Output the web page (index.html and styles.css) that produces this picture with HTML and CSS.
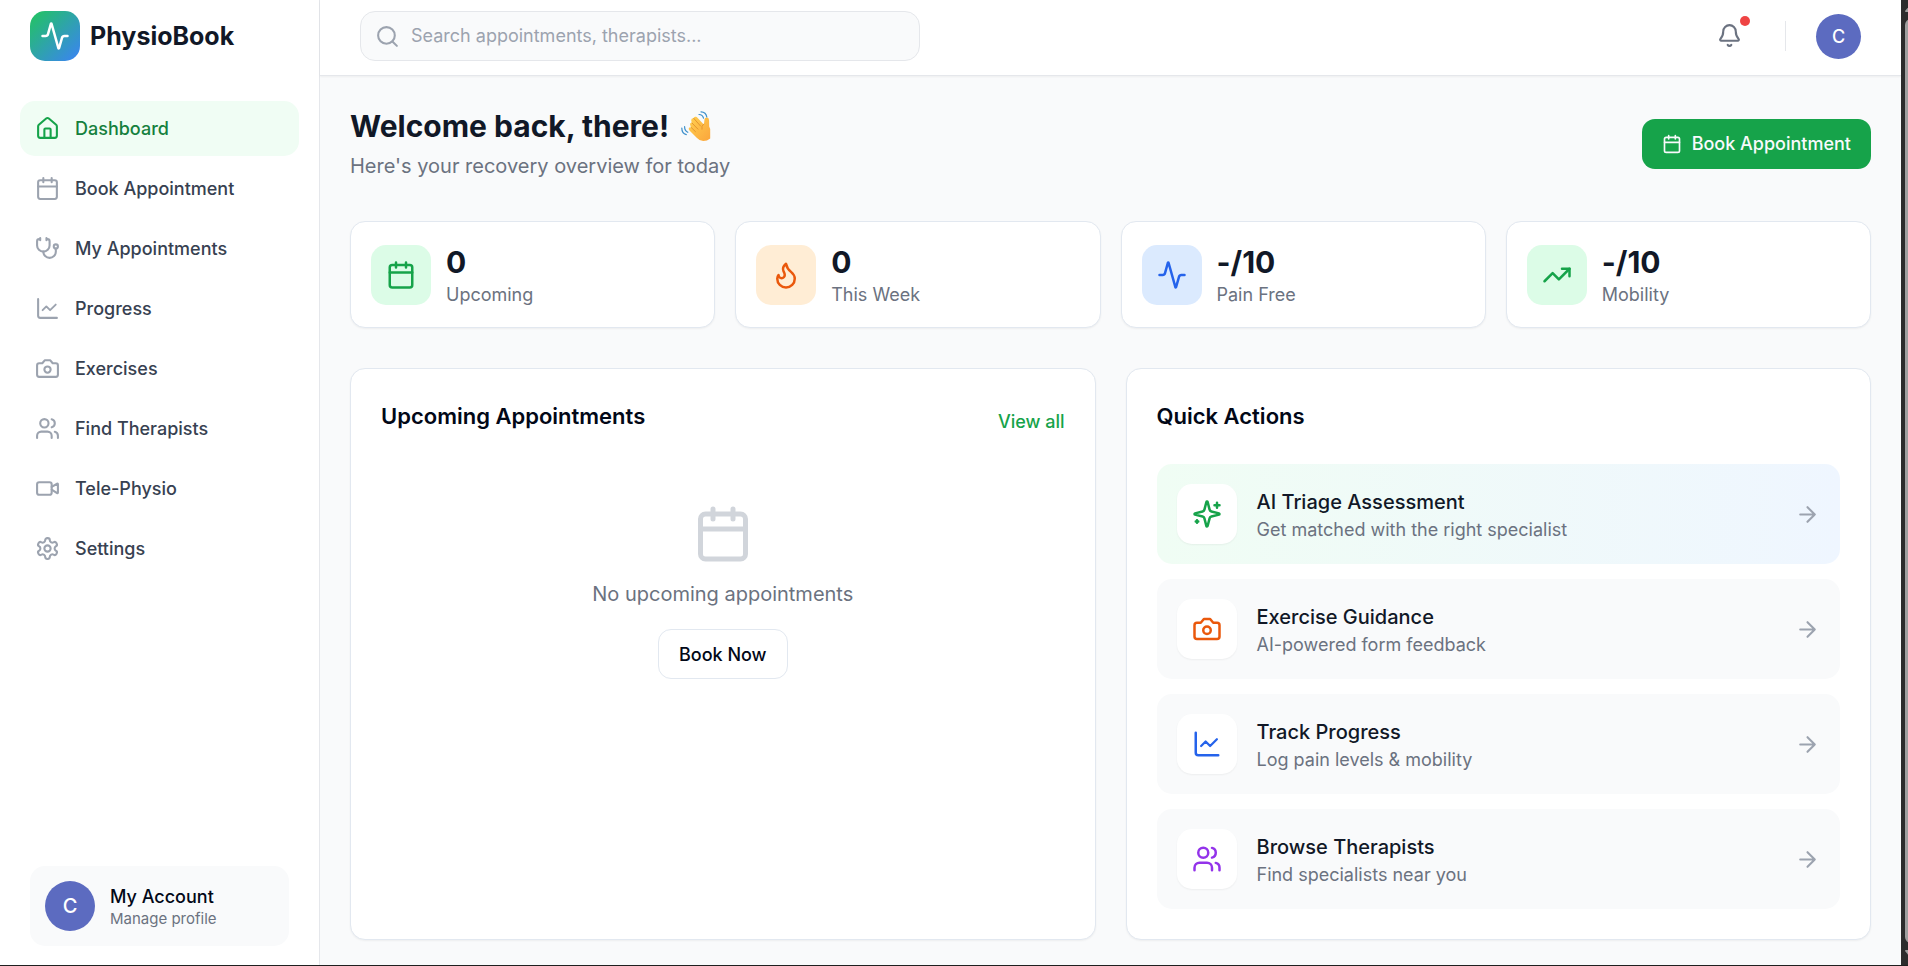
FILE: index.html
```html
<!DOCTYPE html>
<html lang="en">
<head>
<meta charset="utf-8">
<meta name="viewport" content="width=device-width, initial-scale=1">
<title>PhysioBook</title>
<link rel="stylesheet" href="styles.css">
</head>
<body>
<svg class="sprite" aria-hidden="true">
  <symbol id="activity" viewBox="0 0 24 24"><path d="M22 12h-2.48a2 2 0 0 0-1.93 1.46l-2.35 8.36a.25.25 0 0 1-.48 0L9.24 2.18a.25.25 0 0 0-.48 0l-2.35 8.36A2 2 0 0 1 4.49 12H2"/></symbol>
  <symbol id="home" viewBox="0 0 24 24"><path d="M15 21v-8a1 1 0 0 0-1-1h-4a1 1 0 0 0-1 1v8"/><path d="M3 10a2 2 0 0 1 .709-1.528l7-5.999a2 2 0 0 1 2.582 0l7 5.999A2 2 0 0 1 21 10v9a2 2 0 0 1-2 2H5a2 2 0 0 1-2-2z"/></symbol>
  <symbol id="calendar" viewBox="0 0 24 24"><path d="M8 2v4M16 2v4M3 10h18"/><rect width="18" height="18" x="3" y="4" rx="2"/></symbol>
  <symbol id="stethoscope" viewBox="0 0 24 24"><path d="M11 2v2M5 2v2M5 3H4a2 2 0 0 0-2 2v4a6 6 0 0 0 12 0V5a2 2 0 0 0-2-2h-1"/><path d="M8 15a6 6 0 0 0 12 0v-3"/><circle cx="20" cy="10" r="2"/></symbol>
  <symbol id="chart" viewBox="0 0 24 24"><path d="M3 3v16a2 2 0 0 0 2 2h16"/><path d="m7 14 4-4 4 4 6-6" transform="translate(1 1) scale(.9)"/></symbol>
  <symbol id="camera" viewBox="0 0 24 24"><path d="M14.5 4h-5L7 7H4a2 2 0 0 0-2 2v9a2 2 0 0 0 2 2h16a2 2 0 0 0 2-2V9a2 2 0 0 0-2-2h-3l-2.500-3z"/><circle cx="12" cy="13" r="3"/></symbol>
  <symbol id="users" viewBox="0 0 24 24"><path d="M16 21v-2a4 4 0 0 0-4-4H6a4 4 0 0 0-4 4v2"/><circle cx="9" cy="7" r="4"/><path d="M22 21v-2a4 4 0 0 0-3-3.870M16 3.130a4 4 0 0 1 0 7.750"/></symbol>
  <symbol id="video" viewBox="0 0 24 24"><path d="m16 13 5.223 3.482a.5.5 0 0 0 .777-.416V7.870a.5.5 0 0 0-.752-.432L16 10.500"/><rect x="2" y="6" width="14" height="12" rx="2"/></symbol>
  <symbol id="settings" viewBox="0 0 24 24"><path d="M12.220 2h-.440a2 2 0 0 0-2 2v.180a2 2 0 0 1-1 1.730l-.430.250a2 2 0 0 1-2 0l-.150-.080a2 2 0 0 0-2.730.730l-.220.380a2 2 0 0 0 .730 2.730l.150.100a2 2 0 0 1 1 1.720v.510a2 2 0 0 1-1 1.740l-.150.090a2 2 0 0 0-.730 2.730l.220.380a2 2 0 0 0 2.730.730l.150-.080a2 2 0 0 1 2 0l.430.250a2 2 0 0 1 1 1.730V20a2 2 0 0 0 2 2h.440a2 2 0 0 0 2-2v-.180a2 2 0 0 1 1-1.730l.430-.250a2 2 0 0 1 2 0l.150.080a2 2 0 0 0 2.730-.730l.220-.390a2 2 0 0 0-.730-2.730l-.150-.080a2 2 0 0 1-1-1.740v-.500a2 2 0 0 1 1-1.740l.150-.090a2 2 0 0 0 .730-2.730l-.220-.380a2 2 0 0 0-2.730-.730l-.150.080a2 2 0 0 1-2 0l-.430-.250a2 2 0 0 1-1-1.730V4a2 2 0 0 0-2-2z"/><circle cx="12" cy="12" r="3"/></symbol>
  <symbol id="search" viewBox="0 0 24 24"><circle cx="11" cy="11" r="8"/><path d="m21 21-4.300-4.300"/></symbol>
  <symbol id="bell" viewBox="0 0 24 24"><path d="M10.268 21a2 2 0 0 0 3.464 0"/><path d="M3.262 15.326A1 1 0 0 0 4 17h16a1 1 0 0 0 .740-1.673C19.410 13.956 18 12.499 18 8A6 6 0 0 0 6 8c0 4.499-1.411 5.956-2.738 7.326"/></symbol>
  <symbol id="flame" viewBox="0 0 24 24"><path d="M8.500 14.500A2.500 2.500 0 0 0 11 12c0-1.380-.5-2-1-3-1.072-2.143-.224-4.054 2-6 .5 2.500 2 4.900 4 6.500 2 1.600 3 3.500 3 5.500a7 7 0 1 1-14 0c0-1.153.433-2.294 1-3a2.500 2.500 0 0 0 2.500 2.500z"/></symbol>
  <symbol id="trending" viewBox="0 0 24 24"><path d="M22 7l-8.500 8.500-5-5L2 17"/><path d="M16 7h6v6"/></symbol>
  <symbol id="arrow" viewBox="0 0 24 24"><path d="M5 12h14M12 5l7 7-7 7"/></symbol>
  <symbol id="sparkles" viewBox="0 0 24 24"><path d="M9.937 15.500A2 2 0 0 0 8.500 14.063l-6.135-1.582a.5.5 0 0 1 0-.962L8.500 9.936A2 2 0 0 0 9.937 8.500l1.582-6.135a.5.5 0 0 1 .963 0L14.063 8.500A2 2 0 0 0 15.500 9.937l6.135 1.581a.5.5 0 0 1 0 .964L15.500 14.063a2 2 0 0 0-1.437 1.437l-1.582 6.135a.5.5 0 0 1-.963 0z"/><path d="M20 3v4M22 5h-4M4 17v2M5 18H3"/></symbol>
</svg>

<div class="app">
  <aside class="sidebar">
    <div class="brand">
      <span class="brand-mark"><svg class="icon icon-lg"><use href="#activity"/></svg></span>
      <span class="brand-name">PhysioBook</span>
    </div>
    <nav class="nav" aria-label="Main">
      <a class="nav-item active" href="#" aria-current="page"><svg class="icon icon-md"><use href="#home"/></svg>Dashboard</a>
      <a class="nav-item" href="#"><svg class="icon icon-md"><use href="#calendar"/></svg>Book Appointment</a>
      <a class="nav-item" href="#"><svg class="icon icon-md"><use href="#stethoscope"/></svg>My Appointments</a>
      <a class="nav-item" href="#"><svg class="icon icon-md"><use href="#chart"/></svg>Progress</a>
      <a class="nav-item" href="#"><svg class="icon icon-md"><use href="#camera"/></svg>Exercises</a>
      <a class="nav-item" href="#"><svg class="icon icon-md"><use href="#users"/></svg>Find Therapists</a>
      <a class="nav-item" href="#"><svg class="icon icon-md"><use href="#video"/></svg>Tele-Physio</a>
      <a class="nav-item" href="#"><svg class="icon icon-md"><use href="#settings"/></svg>Settings</a>
    </nav>
    <div class="account">
      <button class="avatar avatar-lg" type="button" aria-label="Open account menu">C</button>
      <div>
        <p class="account-name">My Account</p>
        <p class="account-note">Manage profile</p>
      </div>
    </div>
  </aside>

  <div class="page">
    <header class="topbar">
      <label class="search">
        <svg class="icon icon-md"><use href="#search"/></svg>
        <input type="search" aria-label="Search" placeholder="Search appointments, therapists...">
      </label>
      <div class="topbar-tools">
        <button class="bell" type="button" aria-label="Notifications"><svg class="icon icon-md"><use href="#bell"/></svg><span class="bell-dot"></span></button>
        <span class="divider"></span>
        <button class="avatar" type="button" aria-label="Open user menu">C</button>
      </div>
    </header>

    <main class="content">
      <section class="welcome">
        <div>
          <h1>Welcome back, there!
            <svg class="wave" viewBox="0 0 30 30" role="img" aria-label="Waving hand">
              <defs><linearGradient id="skin" x1="0" y1="0" x2="1" y2="1"><stop offset="0" stop-color="#ffd04f"/><stop offset="1" stop-color="#fba53c"/></linearGradient></defs>
              <path d="M8.500 19.500q-1.800-2.500.5-3.300l1 .2-.8-2.400q-.6-2.200 1.600-2.300l-.6-2.200q-.1-2.300 2.200-2.200.6-2.200 2.700-1.500.9.300 1.600 1.200l5.800 6.200q.9-1.200.8-3.200.1-3.700 2.900-3.400 2 .4 1.900 3.100l.1 5.800 1 2.500v9.500q-3 2.500-7 2.500-3.600 0-6.200-3z" fill="url(#skin)"/>
              <path d="M10.200 16.500l4.300 4.200M11 12l6 6.200M12.700 7.300l6.800 7.700M22.500 13.200q-2.400 1.600-1.600 5" stroke="#e0902c" stroke-width=".9" fill="none" stroke-linecap="round"/>
              <path d="M18 3.500q3.500 0 4.500 3.700M20 .8q5 .2 5.800 5.200M.8 17q0 5.500 4.500 6.700M3.600 15.700q0 4 3.200 5.600" stroke="#3c8fcb" stroke-width="1.200" fill="none" stroke-linecap="round"/>
            </svg>
          </h1>
          <p class="subtitle">Here's your recovery overview for today</p>
        </div>
        <button class="btn btn-primary" type="button"><svg class="icon icon-sm"><use href="#calendar"/></svg>Book Appointment</button>
      </section>

      <section class="stats" aria-label="Overview">
        <div class="card stat"><span class="tile green"><svg class="icon icon-lg"><use href="#calendar"/></svg></span><div><p class="stat-value">0</p><p class="stat-label">Upcoming</p></div></div>
        <div class="card stat"><span class="tile orange"><svg class="icon icon-lg"><use href="#flame"/></svg></span><div><p class="stat-value">0</p><p class="stat-label">This Week</p></div></div>
        <div class="card stat"><span class="tile blue"><svg class="icon icon-lg"><use href="#activity"/></svg></span><div><p class="stat-value">-/10</p><p class="stat-label">Pain Free</p></div></div>
        <div class="card stat"><span class="tile green"><svg class="icon icon-lg"><use href="#trending"/></svg></span><div><p class="stat-value">-/10</p><p class="stat-label">Mobility</p></div></div>
      </section>

      <div class="panels">
        <section class="card panel">
          <div class="panel-head"><h2>Upcoming Appointments</h2><a class="view-all" href="#">View all</a></div>
          <div class="empty">
            <svg class="icon icon-xl"><use href="#calendar"/></svg>
            <p>No upcoming appointments</p>
            <button class="btn btn-outline" type="button">Book Now</button>
          </div>
        </section>
        <section class="card panel">
          <div class="panel-head"><h2>Quick Actions</h2></div>
          <div class="actions">
            <a class="action featured" href="#"><span class="tile raised tint-green"><svg class="icon icon-lg"><use href="#sparkles"/></svg></span><span class="action-text"><span class="action-title">AI Triage Assessment</span><span class="action-note">Get matched with the right specialist</span></span><svg class="icon icon-md go"><use href="#arrow"/></svg></a>
            <a class="action" href="#"><span class="tile raised tint-orange"><svg class="icon icon-lg"><use href="#camera"/></svg></span><span class="action-text"><span class="action-title">Exercise Guidance</span><span class="action-note">AI-powered form feedback</span></span><svg class="icon icon-md go"><use href="#arrow"/></svg></a>
            <a class="action" href="#"><span class="tile raised tint-blue"><svg class="icon icon-lg"><use href="#chart"/></svg></span><span class="action-text"><span class="action-title">Track Progress</span><span class="action-note">Log pain levels &amp; mobility</span></span><svg class="icon icon-md go"><use href="#arrow"/></svg></a>
            <a class="action" href="#"><span class="tile raised tint-purple"><svg class="icon icon-lg"><use href="#users"/></svg></span><span class="action-text"><span class="action-title">Browse Therapists</span><span class="action-note">Find specialists near you</span></span><svg class="icon icon-md go"><use href="#arrow"/></svg></a>
          </div>
        </section>
      </div>
    </main>
  </div>

  <div class="scrollbar" aria-hidden="true">
    <svg class="scroll-arrow" viewBox="0 0 12 8"><path d="M6 0 12 7Q12 8 11 8H1Q0 8 0 7Z"/></svg>
    <span class="thumb"></span>
    <svg class="scroll-arrow" viewBox="0 0 12 8"><path d="M6 8 12 1Q12 0 11 0H1Q0 0 0 1Z"/></svg>
  </div>
</div>
</body>
</html>
```
FILE: styles.css
```css
:root {
  --ink: #111827;
  --ink-strong: #020817;
  --muted: #6b7280;
  --faint: #9ca3af;
  --line: #e2e8f0;
  --surface: #f9fafb;
  --green: #16a34a;
  --text-sm: 18px;
  --text-md: 20px;
}

* { box-sizing: border-box; }

body {
  margin: 0;
  font-family: Inter, "Liberation Sans", sans-serif;
  font-size: var(--text-md);
  line-height: 30px;
  color: var(--ink-strong);
  background: var(--surface);
}

h1, h2, p { margin: 0; }
a { color: inherit; text-decoration: none; }
button, input { font: inherit; color: inherit; }
button { border: 0; background: none; padding: 0; cursor: pointer; }

.sprite { position: absolute; width: 0; height: 0; }

.icon {
  flex: none;
  fill: none;
  stroke: currentColor;
  stroke-width: 2;
  stroke-linecap: round;
  stroke-linejoin: round;
}
.icon-sm { width: 20px; height: 20px; }
.icon-md { width: 25px; height: 25px; }
.icon-lg { width: 30px; height: 30px; }
.icon-xl { width: 60px; height: 60px; }

.app {
  display: grid;
  grid-template-columns: 320px minmax(0, 1fr) 7px;
  min-height: 100vh;
  border-bottom: 1px solid #1f1f1f;
}

/* Sidebar */
.sidebar {
  display: flex;
  flex-direction: column;
  padding: 11px 20px 19px;
  background: #fff;
  border-right: 1px solid #e5e7eb;
}
.brand { display: flex; align-items: center; gap: 10px; padding: 0 10px; }
.brand-mark {
  display: grid;
  place-items: center;
  width: 50px;
  height: 50px;
  border-radius: 15px;
  color: #fff;
  background: linear-gradient(to bottom right, #22c55e, #3b82f6);
}
.brand-name { font-size: 25px; font-weight: 700; color: var(--ink); }

.nav { display: flex; flex-direction: column; gap: 5px; margin-top: 40px; }
.nav-item {
  display: flex;
  align-items: center;
  gap: 15px;
  padding: 15px;
  border-radius: 15px;
  font-size: var(--text-sm);
  line-height: 25px;
  font-weight: 500;
  color: #374151;
}
.nav-item .icon { color: var(--faint); }
.nav-item.active { color: #15803d; background: #f0fdf4; }
.nav-item.active .icon { color: var(--green); }

.account {
  display: flex;
  align-items: center;
  gap: 15px;
  margin: auto 10px 0;
  padding: 15px;
  border-radius: 15px;
  background: var(--surface);
}
.account-name { font-size: var(--text-sm); line-height: 25px; font-weight: 500; }
.account-note { font-size: 15px; line-height: 20px; color: var(--muted); }

.avatar {
  flex: none;
  width: 45px;
  height: 45px;
  border-radius: 50%;
  font-size: 18px;
  line-height: 25px;
  font-weight: 500;
  color: #fff;
  background: #5c6bc0;
}
.avatar-lg { width: 50px; height: 50px; font-size: 20px; }

/* Top bar */
.page { display: flex; flex-direction: column; }
.topbar {
  display: flex;
  align-items: center;
  justify-content: space-between;
  padding: 11px 40px 14px;
  background: #fff;
  border-bottom: 1px solid #e5e7eb;
  box-shadow: 0 1px 2px rgb(0 0 0 / 5%);
}
.search {
  display: flex;
  align-items: center;
  gap: 11px;
  flex: 0 1 560px;
  height: 50px;
  padding: 0 14px;
  border: 1px solid #e5e7eb;
  border-radius: 15px;
  color: var(--faint);
  background: var(--surface);
}
.search input {
  flex: 1;
  min-width: 0;
  border: 0;
  outline: 0;
  padding: 0;
  font-size: var(--text-sm);
  background: none;
  color: var(--ink);
}
.search input::placeholder { color: var(--faint); opacity: 1; }

.topbar-tools { display: flex; align-items: center; gap: 30px; }
.bell {
  position: relative;
  display: flex;
  align-items: flex-start;
  width: 50px;
  height: 50px;
  padding: 12px;
  color: var(--muted);
}
.bell-dot {
  position: absolute;
  top: 5px;
  right: 5px;
  width: 10px;
  height: 10px;
  border-radius: 50%;
  background: #ef4444;
}
.divider { width: 1px; height: 30px; background: #e5e7eb; }

/* Content */
.content { flex: 1; display: flex; flex-direction: column; padding: 30px 30px 25px; }
.welcome { display: flex; align-items: center; justify-content: space-between; }
h1 {
  display: flex;
  align-items: center;
  gap: 12px;
  font-size: 30px;
  line-height: 40px;
  font-weight: 700;
  color: var(--ink);
}
.wave { width: 30px; height: 30px; }
.subtitle { padding-top: 5px; color: var(--muted); }

.btn {
  display: flex;
  align-items: center;
  justify-content: center;
  gap: 10px;
  height: 50px;
  padding: 0 20px;
  border-radius: 13px;
  font-size: var(--text-sm);
  line-height: 25px;
  font-weight: 500;
}
.btn-primary { color: #f8fafc; background: var(--green); }
.btn-outline { border: 1px solid var(--line); background: #fff; }

.card {
  background: #fff;
  border: 1px solid var(--line);
  border-radius: 15px;
  box-shadow: 0 1px 2px rgb(0 0 0 / 5%);
}

.stats {
  display: grid;
  grid-template-columns: repeat(4, minmax(0, 1fr));
  gap: 20px;
  margin-top: 40px;
}
.stat { display: flex; align-items: center; gap: 15px; padding: 20px; }
.tile {
  flex: none;
  display: grid;
  place-items: center;
  width: 60px;
  height: 60px;
  border-radius: 15px;
}
.green { color: var(--green); background: #dcfce7; }
.orange { color: #ea580c; background: #ffedd5; }
.blue { color: #2563eb; background: #dbeafe; }
.stat-value { font-size: 30px; line-height: 40px; font-weight: 700; color: var(--ink); }
.stat-label { font-size: var(--text-sm); line-height: 25px; color: var(--muted); }

.panels {
  flex: 1;
  display: grid;
  grid-template-columns: repeat(2, minmax(0, 1fr));
  gap: 30px;
  margin-top: 40px;
}
.panel { padding: 30px; }
.panel-head { display: flex; justify-content: space-between; }
h2 { font-size: 22px; line-height: 35px; font-weight: 600; }
.view-all { font-size: var(--text-sm); line-height: 45px; font-weight: 500; color: var(--green); }

.empty {
  display: flex;
  flex-direction: column;
  align-items: center;
  padding-top: 60px;
  color: var(--muted);
}
.empty .icon { color: #d1d5db; }
.empty p { margin: 15px 0 20px; }
.empty .btn { color: var(--ink-strong); }

.actions { display: flex; flex-direction: column; gap: 15px; margin-top: 30px; }
.action {
  display: flex;
  align-items: center;
  gap: 20px;
  padding: 20px;
  border-radius: 15px;
  background: var(--surface);
}
.featured { background: linear-gradient(to right, #f0fdf4, #eff6ff); }
.raised { background: #fff; box-shadow: 0 1px 2px rgb(0 0 0 / 5%); }
.tint-green { color: var(--green); }
.tint-orange { color: #ea580c; }
.tint-blue { color: #2563eb; }
.tint-purple { color: #9333ea; }
.action-text { flex: 1; display: flex; flex-direction: column; }
.action-title { font-weight: 500; color: var(--ink); }
.action-note { font-size: var(--text-sm); line-height: 25px; color: var(--muted); }
.go { color: var(--faint); }

/* Scrollbar */
.scrollbar {
  display: flex;
  flex-direction: column;
  gap: 7px;
  padding: 4px 0 7px 4px;
  overflow: hidden;
  background: #2c2c2c;
}
.scroll-arrow { flex: none; width: 12px; height: 8px; fill: #9f9f9f; }
.thumb { flex: 1; width: 12px; border-radius: 6px; background: #9f9f9f; }
```
